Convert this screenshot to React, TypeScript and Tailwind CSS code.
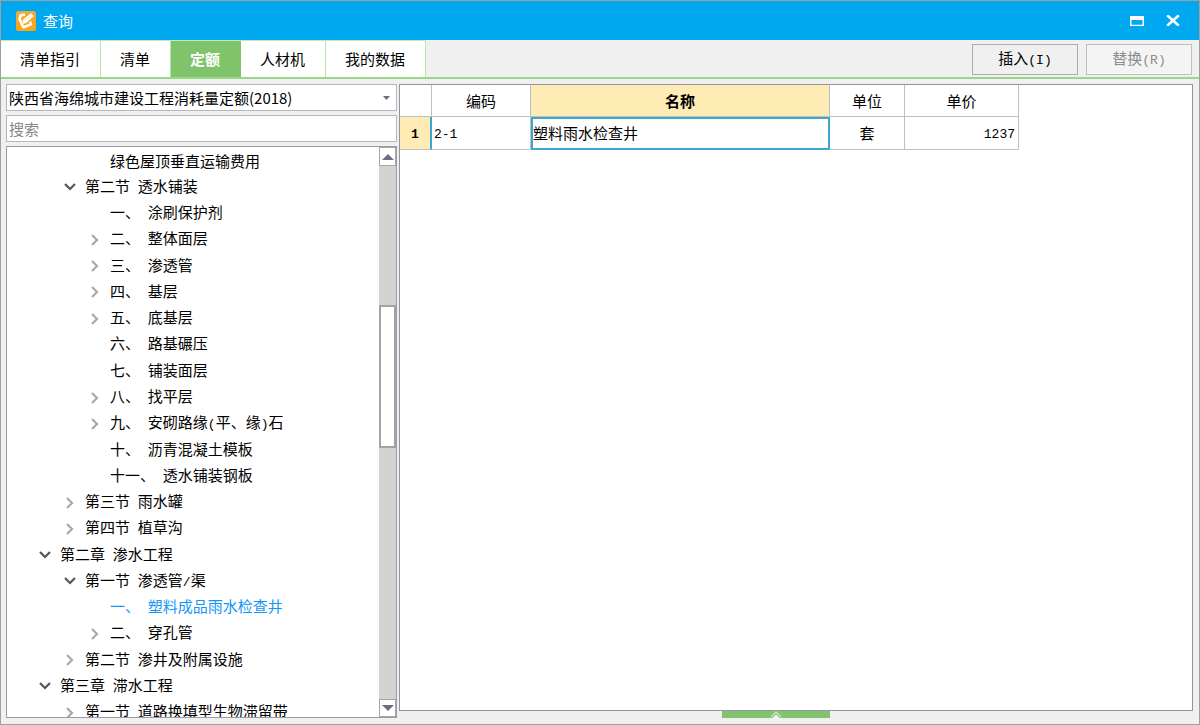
import { useState } from 'react';
import clsx from 'clsx';

interface TreeNode {
  label: string;
  level: 0 | 1 | 2;
  state?: 'open' | 'closed';
}

const TABS = ['清单指引', '清单', '定额', '人材机', '我的数据'];

const NODES: TreeNode[] = [
  { label: '绿色屋顶垂直运输费用', level: 2 },
  { label: '第二节 透水铺装', level: 1, state: 'open' },
  { label: '一、 涂刷保护剂', level: 2 },
  { label: '二、 整体面层', level: 2, state: 'closed' },
  { label: '三、 渗透管', level: 2, state: 'closed' },
  { label: '四、 基层', level: 2, state: 'closed' },
  { label: '五、 底基层', level: 2, state: 'closed' },
  { label: '六、 路基碾压', level: 2 },
  { label: '七、 铺装面层', level: 2 },
  { label: '八、 找平层', level: 2, state: 'closed' },
  { label: '九、 安砌路缘(平、缘)石', level: 2, state: 'closed' },
  { label: '十、 沥青混凝土模板', level: 2 },
  { label: '十一、 透水铺装钢板', level: 2 },
  { label: '第三节 雨水罐', level: 1, state: 'closed' },
  { label: '第四节 植草沟', level: 1, state: 'closed' },
  { label: '第二章 渗水工程', level: 0, state: 'open' },
  { label: '第一节 渗透管/渠', level: 1, state: 'open' },
  { label: '一、 塑料成品雨水检查井', level: 2 },
  { label: '二、 穿孔管', level: 2, state: 'closed' },
  { label: '第二节 渗井及附属设施', level: 1, state: 'closed' },
  { label: '第三章 滞水工程', level: 0, state: 'open' },
  { label: '第一节 道路换填型生物滞留带', level: 1, state: 'closed' },
];

const INDENT = ['pl-[30px]', 'pl-[55px]', 'pl-[80px]'];

// Half-width characters are set in the mono face, half a CJK cell each
function Mixed({ text }: { text: string }) {
  return (
    <>
      {text.split(/([\x20-\x7e]+)/).map((part, i) =>
        i % 2 ? (
          <span key={i} className="font-['Liberation_Mono',monospace] text-[13px] whitespace-pre">{part}</span>
        ) : (
          part
        )
      )}
    </>
  );
}

function Logo() {
  return (
    <svg width="20" height="20" viewBox="0 0 20 20" fill="none">
      <defs>
        <linearGradient id="logo" x1="0" y1="0" x2="0" y2="1">
          <stop offset="0" stopColor="#f3a83c" />
          <stop offset="1" stopColor="#fba50f" />
        </linearGradient>
      </defs>
      <rect width="20" height="20" rx="2.5" fill="url(#logo)" />
      <path d="M9 3.6 4.6 4.2 3.6 8l3.6 8.2 7.8-2.8-1-2.6" stroke="#fff" strokeWidth="2.6" strokeLinejoin="round" />
      <path d="m7.2 8.6 7.6-6.4 3 2.8-7.8 7.2-3.4.6Z" fill="#fff" />
      <path d="m9.2 9.6 5-4.6" stroke="#fbcf86" strokeWidth=".7" />
    </svg>
  );
}

function TitleBar() {
  return (
    <header className="flex h-[39px] shrink-0 items-center bg-[#00a8f0] pl-[15px] pr-4 text-white">
      <Logo />
      <h1 className="ml-[7px] flex-1">查询</h1>
      <div className="flex items-center gap-4">
        <button aria-label="最大化" className="flex size-5 items-center justify-center">
          <svg width="14" height="10" viewBox="0 0 14 10" fill="none">
            <path d="M.75.5h12.5v9H.75Z" stroke="#fff" strokeWidth="1.5" />
            <path d="M0 0h14v4H0Z" fill="#fff" />
          </svg>
        </button>
        <button aria-label="关闭" className="flex size-5 items-center justify-center">
          <svg width="14" height="11" viewBox="0 0 14 11" fill="none" stroke="#fff" strokeWidth="2.6">
            <path d="M1.2.3 12.8 10.7M12.8.3 1.2 10.7" />
          </svg>
        </button>
      </div>
    </header>
  );
}

function Toolbar() {
  const [active, setActive] = useState('定额');

  return (
    <div className="flex h-[39px] shrink-0 items-end border-b-2 border-[#9ad688] pr-[7px]">
      <nav className="flex self-stretch border-t border-[#c4e9b8]">
        {TABS.map((tab) => (
          <button
            key={tab}
            onClick={() => setActive(tab)}
            className={clsx(
              'border-r pr-5 pl-[19px]',
              tab === active
                ? 'border-[#7fc36a] bg-[#7fc36a] font-bold text-white'
                : 'border-[#b4e6a4] bg-white'
            )}
          >
            {tab}
          </button>
        ))}
      </nav>
      <div className="ml-auto flex gap-2 pb-[2px]">
        <button className="h-[31px] w-[106px] border border-[#adadad] bg-[#f0f0f0]">
          <Mixed text="插入(I)" />
        </button>
        <button disabled className="h-[31px] w-[106px] border border-[#bfbfbf] bg-[#f4f4f4] text-[#8c8c8c]">
          <Mixed text="替换(R)" />
        </button>
      </div>
    </div>
  );
}

function Chevron({ open }: { open: boolean }) {
  return open ? (
    <svg width="12" height="8" viewBox="0 0 12 8" fill="none" stroke="#555" strokeWidth="2.2">
      <path d="m1 1 5 5 5-5" />
    </svg>
  ) : (
    <svg width="8" height="12" viewBox="0 0 8 12" fill="none" stroke="#a9a9a9" strokeWidth="2.2">
      <path d="m1 1 5 5-5 5" />
    </svg>
  );
}

function ScrollBar() {
  return (
    <div className="flex w-[17px] shrink-0 flex-col bg-[#d3d3d3]">
      <button aria-label="向上滚动" className="flex h-[19px] items-center justify-center border border-[#a3a5a8] bg-white">
        <svg width="12" height="6" viewBox="0 0 12 6" fill="#6a6f85"><path d="M6 0 12 6H0Z" /></svg>
      </button>
      <div className="min-h-0 flex-1">
        <div className="h-[26%]" />
        <div className="h-[27%] border-2 border-[#a3a3a3] bg-white" />
      </div>
      <button aria-label="向下滚动" className="flex h-[18px] items-center justify-center border border-[#a3a5a8] bg-white">
        <svg width="12" height="6" viewBox="0 0 12 6" fill="#6a6f85"><path d="M0 0h12L6 6Z" /></svg>
      </button>
    </div>
  );
}

function SidePanel() {
  const [selected, setSelected] = useState('一、 塑料成品雨水检查井');

  return (
    <aside className="flex w-[391px] shrink-0 flex-col gap-1">
      <div className="relative">
        <select
          aria-label="定额库"
          className="block h-[27px] w-full appearance-none border border-[#b4b7bc] bg-white pl-[2px] outline-none"
        >
          <option>陕西省海绵城市建设工程消耗量定额(2018)</option>
        </select>
        <svg className="pointer-events-none absolute top-3 right-[7px]" width="7" height="4" viewBox="0 0 7 4" fill="#6a6f7c">
          <path d="M0 0h7L3.5 4Z" />
        </svg>
      </div>
      <input
        type="text"
        aria-label="搜索"
        placeholder="搜索"
        className="h-[27px] w-full border border-[#b4b7bc] bg-white px-[2px] outline-none placeholder:text-[#868686]"
      />
      <div className="flex min-h-0 flex-1 overflow-hidden border border-[#9a9da5] bg-white">
        <ul className="-mb-[9px] flex flex-1 flex-col pt-px">
          {NODES.map((node, i) => (
            <li key={i} className={clsx('flex min-h-0 flex-1 items-center gap-[7px]', INDENT[node.level])}>
              <span className="flex w-4 justify-center">
                {node.state && (
                  <button aria-label={node.state === 'open' ? '折叠' : '展开'}>
                    <Chevron open={node.state === 'open'} />
                  </button>
                )}
              </span>
              <button
                onClick={() => setSelected(node.label)}
                className={clsx('whitespace-nowrap', node.label === selected && 'text-[#1296f8]')}
              >
                <Mixed text={node.label} />
              </button>
            </li>
          ))}
        </ul>
        <ScrollBar />
      </div>
    </aside>
  );
}

function QuotaTable() {
  return (
    <table className="w-[619px] table-fixed border-separate border-spacing-0 [&_td]:border-r [&_td]:border-b [&_td]:border-[#c0c0c0] [&_th]:border-r [&_th]:border-b [&_th]:border-[#c0c0c0]">
      <colgroup>
        <col className="w-8" />
        <col className="w-[99px]" />
        <col className="w-[299px]" />
        <col className="w-[75px]" />
        <col className="w-[114px]" />
      </colgroup>
      <thead>
        <tr className="h-8">
          <th />
          <th className="font-normal">编码</th>
          <th className="bg-[#ffecb5] font-bold">名称</th>
          <th className="font-normal">单位</th>
          <th className="font-normal">单价</th>
        </tr>
      </thead>
      <tbody>
        <tr className="h-[33px]">
          <th className="border-r-2! border-r-[#3ba7d0]! bg-[#ffecb5] font-bold"><Mixed text="1" /></th>
          <td className="pl-[2px]"><Mixed text="2-1" /></td>
          <td className="pl-[2px] outline-2 -outline-offset-2 outline-[#3ba7d0]">塑料雨水检查井</td>
          <td className="text-center">套</td>
          <td className="pr-[3px] text-right"><Mixed text="1237" /></td>
        </tr>
      </tbody>
    </table>
  );
}

export default function App() {
  return (
    <div className="flex h-screen flex-col border border-[#a0a0a0] bg-[#f0f0f0] font-['Noto_Sans_CJK_SC',sans-serif] text-[15px] leading-5 text-black">
      <TitleBar />
      <Toolbar />
      <main className="flex min-h-0 flex-1 gap-[2px] pt-[5px] pr-[6px] pb-[6px] pl-[5px]">
        <SidePanel />
        <section className="flex min-w-0 flex-1 flex-col">
          <div className="min-h-0 flex-1 border border-[#9094a0] bg-white">
            <QuotaTable />
          </div>
          <button aria-label="展开详情" className="-ml-10 flex h-[7px] w-[108px] items-end justify-center self-center overflow-hidden bg-[#82c46e]">
            <svg width="12" height="7" viewBox="0 0 12 7" fill="none">
              <path d="m1 6 5-5 5 5" stroke="#c9e8be" strokeWidth="1.4" />
              <path d="m2.5 7 3.5-3.5L9.5 7Z" fill="#fff" />
            </svg>
          </button>
        </section>
      </main>
    </div>
  );
}
